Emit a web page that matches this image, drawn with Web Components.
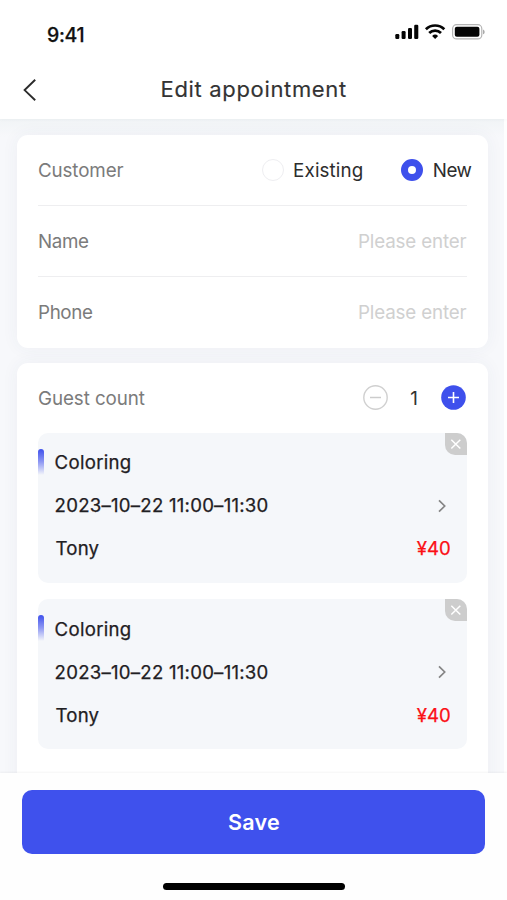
<!DOCTYPE html>
<html lang="en">
<head>
<meta charset="utf-8">
<title>Edit appointment</title>
<style>
html,body{margin:0;background:#fefefe}
body{font-family:Inter,"Liberation Sans","Noto Sans CJK SC",sans-serif;color:#1f2023;width:507px;height:900px;overflow:hidden}
</style>
</head>
<body>
<appointment-screen></appointment-screen>
<script>
function define(name, html, setup) {
  const tpl = document.createElement('template');
  tpl.innerHTML = html;
  customElements.define(name, class extends HTMLElement {
    constructor() {
      super();
      this.attachShadow({ mode: 'open' }).append(tpl.content.cloneNode(true));
    }
    connectedCallback() { if (setup) setup.call(this, this.shadowRoot); }
  });
}

/* Label tracked so that its glyphs span exactly `span` pixels. */
define('fit-text', `<style>
:host{display:block;white-space:nowrap;line-height:1.2;font-kerning:normal}
span{display:block}
</style><span><slot></slot></span>`, function (root) {
  const s = getComputedStyle(this), text = this.textContent, span = root.querySelector('span');
  const ctx = document.createElement('canvas').getContext('2d');
  ctx.font = `${s.fontWeight} ${s.fontSize} ${s.fontFamily}`;
  const m = ctx.measureText(text);
  const ink = m.actualBoundingBoxLeft + m.actualBoundingBoxRight;
  const ls = text.length > 1 ? (+this.getAttribute('span') - ink) / (text.length - 1) : 0;
  span.style.letterSpacing = ls + 'px';
  span.style.marginLeft = m.actualBoundingBoxLeft + 'px';
  span.style.marginRight = (m.actualBoundingBoxRight - m.width - ls) + 'px';
});

define('status-bar', `<style>
:host{display:flex;justify-content:space-between;align-items:center;height:60px;padding:0 22px 0 48px;box-sizing:border-box}
fit-text{font-size:19.5px;font-weight:500;-webkit-text-stroke:.25px;color:#111;padding-top:11px}
svg{display:block;margin-top:3px}
</style>
<fit-text span="35.5">9:41</fit-text>
<svg width="90" height="18" viewBox="395 23 90 18">
<g fill="#050505"><rect x="395.3" y="34" width="4" height="5" rx="1.2"/><rect x="401.6" y="31" width="4" height="8" rx="1.2"/><rect x="408" y="28" width="4" height="11" rx="1.2"/><rect x="414.2" y="24.7" width="4.1" height="14.3" rx="1.2"/></g>
<g fill="none" stroke="#050505" stroke-width="2.7"><path d="M425.9 29.3a13 13 0 0 1 18.4 0"/><path d="M429.2 33a8.4 8.4 0 0 1 11.8 0"/></g>
<path d="M432.1 36a4.3 4.3 0 0 1 6 0l-3 3z" fill="#050505"/>
<rect x="452.6" y="24.7" width="29.2" height="14.2" rx="4" fill="none" stroke="#b4b4b4" stroke-width="1.2"/>
<rect x="454.8" y="26.8" width="24.6" height="9.9" rx="2" fill="#050505"/>
<path d="M483 29.5c2.2.8 2.2 4 0 4.8z" fill="#aaa"/>
</svg>`);

define('nav-bar', `<style>
:host{display:grid;grid-template-columns:161.5px 1fr;align-items:center;height:59px;box-sizing:border-box}
svg{display:block;margin-left:20px}
fit-text{font-size:22px;font-weight:400;-webkit-text-stroke:.15px;color:#333}
</style>
<svg width="20" height="26" viewBox="20 76.5 20 26"><path d="M35.2 79.2 24.6 89.6l10.6 10.2" fill="none" stroke="#2b2b2b" stroke-width="1.9"/></svg>
<fit-text span="184.5"><slot></slot></fit-text>`, function (root) {
  root.querySelector('fit-text').textContent = this.textContent;
  root.querySelector('fit-text').connectedCallback();
});

define('panel-card', `<style>
:host{display:block;box-sizing:border-box;width:471px;padding:0 21.5px 0 21px;background:#fff;border-radius:11px;box-shadow:0 0 17px rgba(55,65,110,.055)}
</style><slot></slot>`);

define('form-row', `<style>
:host{display:flex;justify-content:space-between;align-items:center;height:71px;box-sizing:border-box;font-size:18.8px;color:#7b7b7b}
:host([divided]){border-bottom:1.4px solid #eeeef0}
::slotted(fit-text){padding-top:3px}
::slotted(.lead){margin-left:1px}
</style><slot></slot>`);

define('radio-option', `<style>
:host{display:flex;align-items:center;gap:10.5px;color:#2d2d2d}
i{box-sizing:border-box;width:22px;height:22px;border-radius:50%;border:1.3px solid #eeeef1}
:host([checked]) i{border:7px solid #3e50ec}
::slotted(fit-text){padding-top:2px}
</style><i></i><slot></slot>`);

define('count-stepper', `<style>
:host{display:flex;align-items:center;color:#333;margin-right:1px}
svg{display:block}
.n{width:53px;text-align:center;font-size:18.8px;padding-top:1px}
</style>
<svg width="25" height="25" viewBox="0 0 25 25"><circle cx="12.5" cy="12.5" r="11.7" fill="none" stroke="#d0d0d0" stroke-width="1.4"/><path d="M7 12.5h11" stroke="#ccc" stroke-width="1.5"/></svg>
<span class="n"><slot></slot></span>
<svg width="25" height="25" viewBox="0 0 25 25"><circle cx="12.5" cy="12.5" r="12.3" fill="#3e50ec"/><path d="M7 12.5h11M12.5 7v11" stroke="#fff" stroke-width="1.6"/></svg>`);

define('service-card', `<style>
:host{display:block;position:relative;height:149.5px;box-sizing:border-box;padding:8px 16.5px 0 17.6px;background:#f5f7fa;border-radius:10px;font-size:18.6px;font-weight:400;color:#1f2023}
fit-text{-webkit-text-stroke:.25px}
div{display:flex;align-items:center;justify-content:space-between;height:43px}
.bar{position:absolute;left:0;top:15.5px;width:6px;height:26px;border-radius:3px 3px 0 0;background:linear-gradient(#3e50ec,#8f99f3 50%,rgba(245,247,250,0))}
.close{position:absolute;right:-.3px;top:-.5px;display:block}
.price{color:#fb1015}
.go{display:block;margin-right:3.5px}
</style>
<span class="bar"></span>
<svg class="close" width="22" height="22" viewBox="0 0 22 22"><path d="M0 0h12a10 10 0 0 1 10 10v12H10A10 10 0 0 1 0 12z" fill="#cdcdcd"/><path d="m6.3 6.7 9 8.8m0-8.8-9 8.8" stroke="#fff" stroke-width="1.5"/></svg>
<div><fit-text span="74.2">Coloring</fit-text></div>
<div><fit-text span="212">2023–10–22 11:00–11:30</fit-text><svg class="go" width="10" height="14" viewBox="0 0 10 14"><path d="m2 1.3 5.7 5.7L2 12.7" fill="none" stroke="#858585" stroke-width="1.7"/></svg></div>
<div><fit-text span="43">Tony</fit-text><fit-text class="price" span="33.3">¥40</fit-text></div>`);

define('action-footer', `<style>
:host{display:flex;flex-direction:column;align-items:center;box-sizing:border-box;height:127px;width:507px;background:#fefefe;padding:16.5px 0 0;box-shadow:0 -1px 2px rgba(0,0,0,.045);position:relative}
button{all:unset;display:flex;align-items:center;justify-content:center;width:462.5px;height:64.5px;border-radius:10px;background:#3f51ed;color:#fff;font-size:21.5px;font-weight:600}
fit-text{padding-top:3px}
span{display:block;width:182px;height:7px;border-radius:4px;background:#000;margin-top:28.5px}
</style><button><fit-text span="51">Save</fit-text></button><span></span>`);

define('appointment-screen', `<style>
:host{display:grid;grid-template-rows:119px 654px 127px;width:507px;height:900px;overflow:hidden;background:#fefefe}
header{position:relative;background:#fff;box-shadow:0 1px 3px rgba(40,60,80,.035)}
main{width:504px;box-sizing:border-box;overflow:hidden;padding:15.5px 0 0 17px;display:flex;flex-direction:column;gap:15px;background:linear-gradient(#f1f4f6,#f7f8fb 18px)}
main panel-card:last-child{flex:1 0 430px}
.radios{display:flex;gap:38.5px;margin-right:-5px;padding-top:1.6px}
.hint{color:#d0d0d0}
.cards{display:grid;gap:16.7px}
form-row.count{height:70.5px}
</style>
<header><status-bar></status-bar><nav-bar>Edit appointment</nav-bar></header>
<main>
<panel-card>
<form-row divided><fit-text class="lead" span="84.5">Customer</fit-text><div class="radios"><radio-option><fit-text span="68.7">Existing</fit-text></radio-option><radio-option checked><fit-text span="37.7">New</fit-text></radio-option></div></form-row>
<form-row divided><fit-text class="lead" span="50">Name</fit-text><fit-text class="hint" span="107.5">Please enter</fit-text></form-row>
<form-row><fit-text class="lead" span="54">Phone</fit-text><fit-text class="hint" span="107.5">Please enter</fit-text></form-row>
</panel-card>
<panel-card>
<form-row class="count"><fit-text class="lead" span="105.8">Guest count</fit-text><count-stepper>1</count-stepper></form-row>
<div class="cards"><service-card></service-card><service-card></service-card></div>
</panel-card>
</main>
<action-footer></action-footer>`);
</script>
</body>
</html>
